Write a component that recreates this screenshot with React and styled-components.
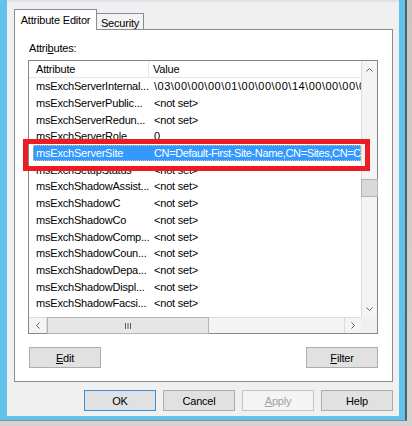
import React from "react";
import styled, { createGlobalStyle } from "styled-components";

const GlobalStyle = createGlobalStyle`
  html, body { margin: 0; padding: 0; }
  body {
    width: 412px;
    height: 426px;
    overflow: hidden;
    background: #cbcbcb;
    font-family: "Liberation Sans", Arial, sans-serif;
    font-size: 11px;
    letter-spacing: -0.2px;
    color: #000;
  }
  #root { width: 412px; height: 426px; }
`;

const Desktop = styled.div`
  width: 412px;
  height: 426px;
  background: linear-gradient(#c6c6c6, #d3d3d3);
  display: flex;
  align-items: flex-start;
`;

const WindowFrame = styled.div`
  box-sizing: border-box;
  width: 407px;
  height: 421px;
  padding: 0 6px 4px 7px;
  background: #62c3ea;
  border-right: 2px solid #5c5c5c;
  border-bottom: 1px solid #8d8d8d;
`;

const Client = styled.div`
  box-sizing: border-box;
  height: 416px;
  background: #f0f0f0;
  border-top: 2px solid #dde3ea;
  padding: 7px 6px 0 7px;
  display: flex;
  flex-direction: column;
`;

const TabStrip = styled.div`
  display: flex;
  align-items: flex-end;
  height: 21px;
  position: relative;
  z-index: 1;
  margin-bottom: -1px;
`;

const Tab = styled.div`
  box-sizing: border-box;
  display: flex;
  align-items: center;
  justify-content: center;
  width: ${(p) => (p.$active ? 83 : 47)}px;
  height: ${(p) => (p.$active ? 21 : 17)}px;
  border: 1px solid #898c95;
  border-left: ${(p) => (p.$active ? "1px solid #898c95" : "none")};
  border-bottom: ${(p) => (p.$active ? "none" : "1px solid #898c95")};
  background: ${(p) => (p.$active ? "#ffffff" : "#f3f3f3")};
  padding-top: ${(p) => (p.$active ? 0 : 2)}px;
  padding-bottom: ${(p) => (p.$active ? 1 : 0)}px;
  white-space: nowrap;
`;

const Panel = styled.div`
  box-sizing: border-box;
  width: 379px;
  height: 353px;
  border: 1px solid #898c95;
  background: #ffffff;
  padding: 11px 0 0 13px;
  display: flex;
  flex-direction: column;
`;

const Label = styled.div`
  line-height: 14px;
  height: 14px;
  margin-left: 1px;
`;

const ListWrap = styled.div`
  position: relative;
  width: 350px;
  height: 274px;
  margin-top: 5px;
`;

const ListBox = styled.div`
  box-sizing: border-box;
  width: 350px;
  height: 274px;
  border: 1px solid #828790;
  background: #ffffff;
  display: grid;
  grid-template-columns: 332px 16px;
  grid-template-rows: 256px 16px;
`;

const Content = styled.div`
  overflow: hidden;
  display: flex;
  flex-direction: column;
`;

const Header = styled.div`
  box-sizing: border-box;
  height: 17px;
  flex: none;
  display: flex;
  border-bottom: 1px solid #e5e5e5;
`;

const HeaderCell = styled.div`
  box-sizing: border-box;
  display: flex;
  align-items: center;
  width: ${(p) => (p.$first ? "120px" : "auto")};
  flex: ${(p) => (p.$first ? "none" : "1")};
  padding-left: ${(p) => (p.$first ? 7 : 4)}px;
  border-right: ${(p) => (p.$first ? "1px solid #e5e5e5" : "none")};
`;

const Row = styled.div`
  box-sizing: border-box;
  height: 16.7px;
  flex: none;
  display: flex;
  align-items: center;
  margin-left: 4px;
  white-space: nowrap;
  background: ${(p) => (p.$selected ? "#3399ff" : "transparent")};
  color: ${(p) => (p.$selected ? "#ffffff" : "#000000")};
  outline: ${(p) => (p.$selected ? "1px dotted #e9c27a" : "none")};
  outline-offset: -1px;
`;

const NameCell = styled.div`
  box-sizing: border-box;
  width: 116px;
  flex: none;
  padding-left: 3px;
  overflow: hidden;
`;

const ValueCell = styled.div`
  flex: 1;
  min-width: 0;
  padding-left: 5px;
  overflow: hidden;
  letter-spacing: ${(p) => p.$spacing || "inherit"};
`;

const VScroll = styled.div`
  box-sizing: border-box;
  display: flex;
  flex-direction: column;
  background: #f4f4f4;
  border-left: 1px solid #dcdcdc;
`;

const HScroll = styled.div`
  box-sizing: border-box;
  display: flex;
  background: #f4f4f4;
  border-top: 1px solid #dcdcdc;
`;

const ArrowCell = styled.div`
  box-sizing: border-box;
  flex: none;
  display: flex;
  align-items: center;
  justify-content: center;
  width: ${(p) => (p.$vertical ? "auto" : `${p.$size}px`)};
  height: ${(p) => (p.$vertical ? `${p.$size}px` : "auto")};
  border-right: ${(p) => (p.$edge === "right" ? "1px solid #dcdcdc" : "none")};
  border-left: ${(p) => (p.$edge === "left" ? "1px solid #dcdcdc" : "none")};
`;

const Track = styled.div`
  flex: 1;
  display: flex;
  flex-direction: ${(p) => (p.$vertical ? "column" : "row")};
`;

const Thumb = styled.div`
  box-sizing: border-box;
  flex: none;
  display: flex;
  align-items: center;
  justify-content: center;
  background: ${(p) => (p.$vertical ? "#d9d9d9" : "#e6e6e6")};
  border: 1px solid #b4b4b4;
  margin-top: ${(p) => (p.$vertical ? `${p.$offset}px` : "-1px")};
  margin-left: ${(p) => (p.$vertical ? "-1px" : `${p.$offset}px`)};
  width: ${(p) => (p.$vertical ? "17px" : `${p.$length}px`)};
  height: ${(p) => (p.$vertical ? `${p.$length}px` : "17px")};
`;

const Corner = styled.div`
  background: #f0f0f0;
`;

const Highlight = styled.div`
  position: absolute;
  left: -5px;
  top: 79px;
  width: 347px;
  height: 32px;
  box-sizing: border-box;
  border: 5px solid #ec1c24;
  pointer-events: none;
`;

const ButtonRow = styled.div`
  display: flex;
  justify-content: ${(p) => (p.$spread ? "space-between" : "flex-end")};
  gap: 7px;
  width: ${(p) => (p.$spread ? "350px" : "auto")};
  margin-top: ${(p) => p.$top}px;
`;

const Button = styled.div`
  box-sizing: border-box;
  width: 72px;
  height: 21px;
  display: flex;
  align-items: center;
  justify-content: center;
  border: 1px solid ${(p) => (p.$default ? "#3c8fd8" : p.$disabled ? "#c4c4c4" : "#adadad")};
  background: ${(p) => (p.$disabled ? "#f4f4f4" : "#e1e1e1")};
  color: ${(p) => (p.$disabled ? "#a0a0a0" : "#000000")};
  margin-left: ${(p) => (p.$nudge ? "1px" : "0")};
`;

const Chevron = ({ dir }) => {
  const pts = {
    up: "0.5,4.5 3.5,1.5 6.5,4.5",
    down: "0.5,1.5 3.5,4.5 6.5,1.5",
    left: "4.5,0.5 1.5,3.5 4.5,6.5",
    right: "1.5,0.5 4.5,3.5 1.5,6.5",
  }[dir];
  const w = dir === "up" || dir === "down" ? 7 : 6;
  const h = dir === "up" || dir === "down" ? 6 : 7;
  return (
    <svg width={w} height={h} viewBox={`0 0 ${w} ${h}`}>
      <polyline points={pts} fill="none" stroke="#606060" strokeWidth="1" />
    </svg>
  );
};

const Grip = () => (
  <svg width="8" height="6" viewBox="0 0 8 6">
    <line x1="1.5" y1="0" x2="1.5" y2="6" stroke="#606060" />
    <line x1="4" y1="0" x2="4" y2="6" stroke="#606060" />
    <line x1="6.5" y1="0" x2="6.5" y2="6" stroke="#606060" />
  </svg>
);

const rows = [
  ["msExchServerInternal...", String.raw`\03\00\00\00\01\00\00\00\14\00\00\00\00\00\00\00`, false, "0.5px"],
  ["msExchServerPublic...", "<not set>"],
  ["msExchServerRedun...", "<not set>"],
  ["msExchServerRole", "0"],
  ["msExchServerSite", "CN=Default-First-Site-Name,CN=Sites,CN=Configuration,DC=contoso,DC=com", true, "-0.35px"],
  ["msExchSetupStatus", "<not set>"],
  ["msExchShadowAssist...", "<not set>"],
  ["msExchShadowC", "<not set>"],
  ["msExchShadowCo", "<not set>"],
  ["msExchShadowComp...", "<not set>"],
  ["msExchShadowCoun...", "<not set>"],
  ["msExchShadowDepa...", "<not set>"],
  ["msExchShadowDispl...", "<not set>"],
  ["msExchShadowFacsi...", "<not set>"],
];

export default function App() {
  return (
    <>
      <GlobalStyle />
      <Desktop>
        <WindowFrame>
          <Client>
            <TabStrip>
              <Tab $active>Attribute Editor</Tab>
              <Tab>Security</Tab>
            </TabStrip>
            <Panel>
              <Label>
                Attri<u>b</u>utes:
              </Label>
              <ListWrap>
                <ListBox>
                  <Content>
                    <Header>
                      <HeaderCell $first>Attribute</HeaderCell>
                      <HeaderCell>Value</HeaderCell>
                    </Header>
                    {rows.map(([name, value, selected, spacing]) => (
                      <Row key={name} $selected={selected}>
                        <NameCell>{name}</NameCell>
                        <ValueCell $spacing={spacing}>{value}</ValueCell>
                      </Row>
                    ))}
                  </Content>
                  <VScroll>
                    <ArrowCell $vertical $size={17}>
                      <Chevron dir="up" />
                    </ArrowCell>
                    <Track $vertical>
                      <Thumb $vertical $offset={101} $length={18} />
                    </Track>
                    <ArrowCell $vertical $size={17}>
                      <Chevron dir="down" />
                    </ArrowCell>
                  </VScroll>
                  <HScroll>
                    <ArrowCell $size={18} $edge="right">
                      <Chevron dir="left" />
                    </ArrowCell>
                    <Track>
                      <Thumb $offset={0} $length={162}>
                        <Grip />
                      </Thumb>
                    </Track>
                    <ArrowCell $size={17} $edge="left">
                      <Chevron dir="right" />
                    </ArrowCell>
                  </HScroll>
                  <Corner />
                </ListBox>
                <Highlight />
              </ListWrap>
              <ButtonRow $spread $top={13}>
                <Button $nudge>
                  <span>
                    <u>E</u>dit
                  </span>
                </Button>
                <Button>
                  <span>
                    <u>F</u>ilter
                  </span>
                </Button>
              </ButtonRow>
            </Panel>
            <ButtonRow $top={8}>
              <Button $default>OK</Button>
              <Button>Cancel</Button>
              <Button $disabled>
                <span>
                  <u>A</u>pply
                </span>
              </Button>
              <Button>Help</Button>
            </ButtonRow>
          </Client>
        </WindowFrame>
      </Desktop>
    </>
  );
}
